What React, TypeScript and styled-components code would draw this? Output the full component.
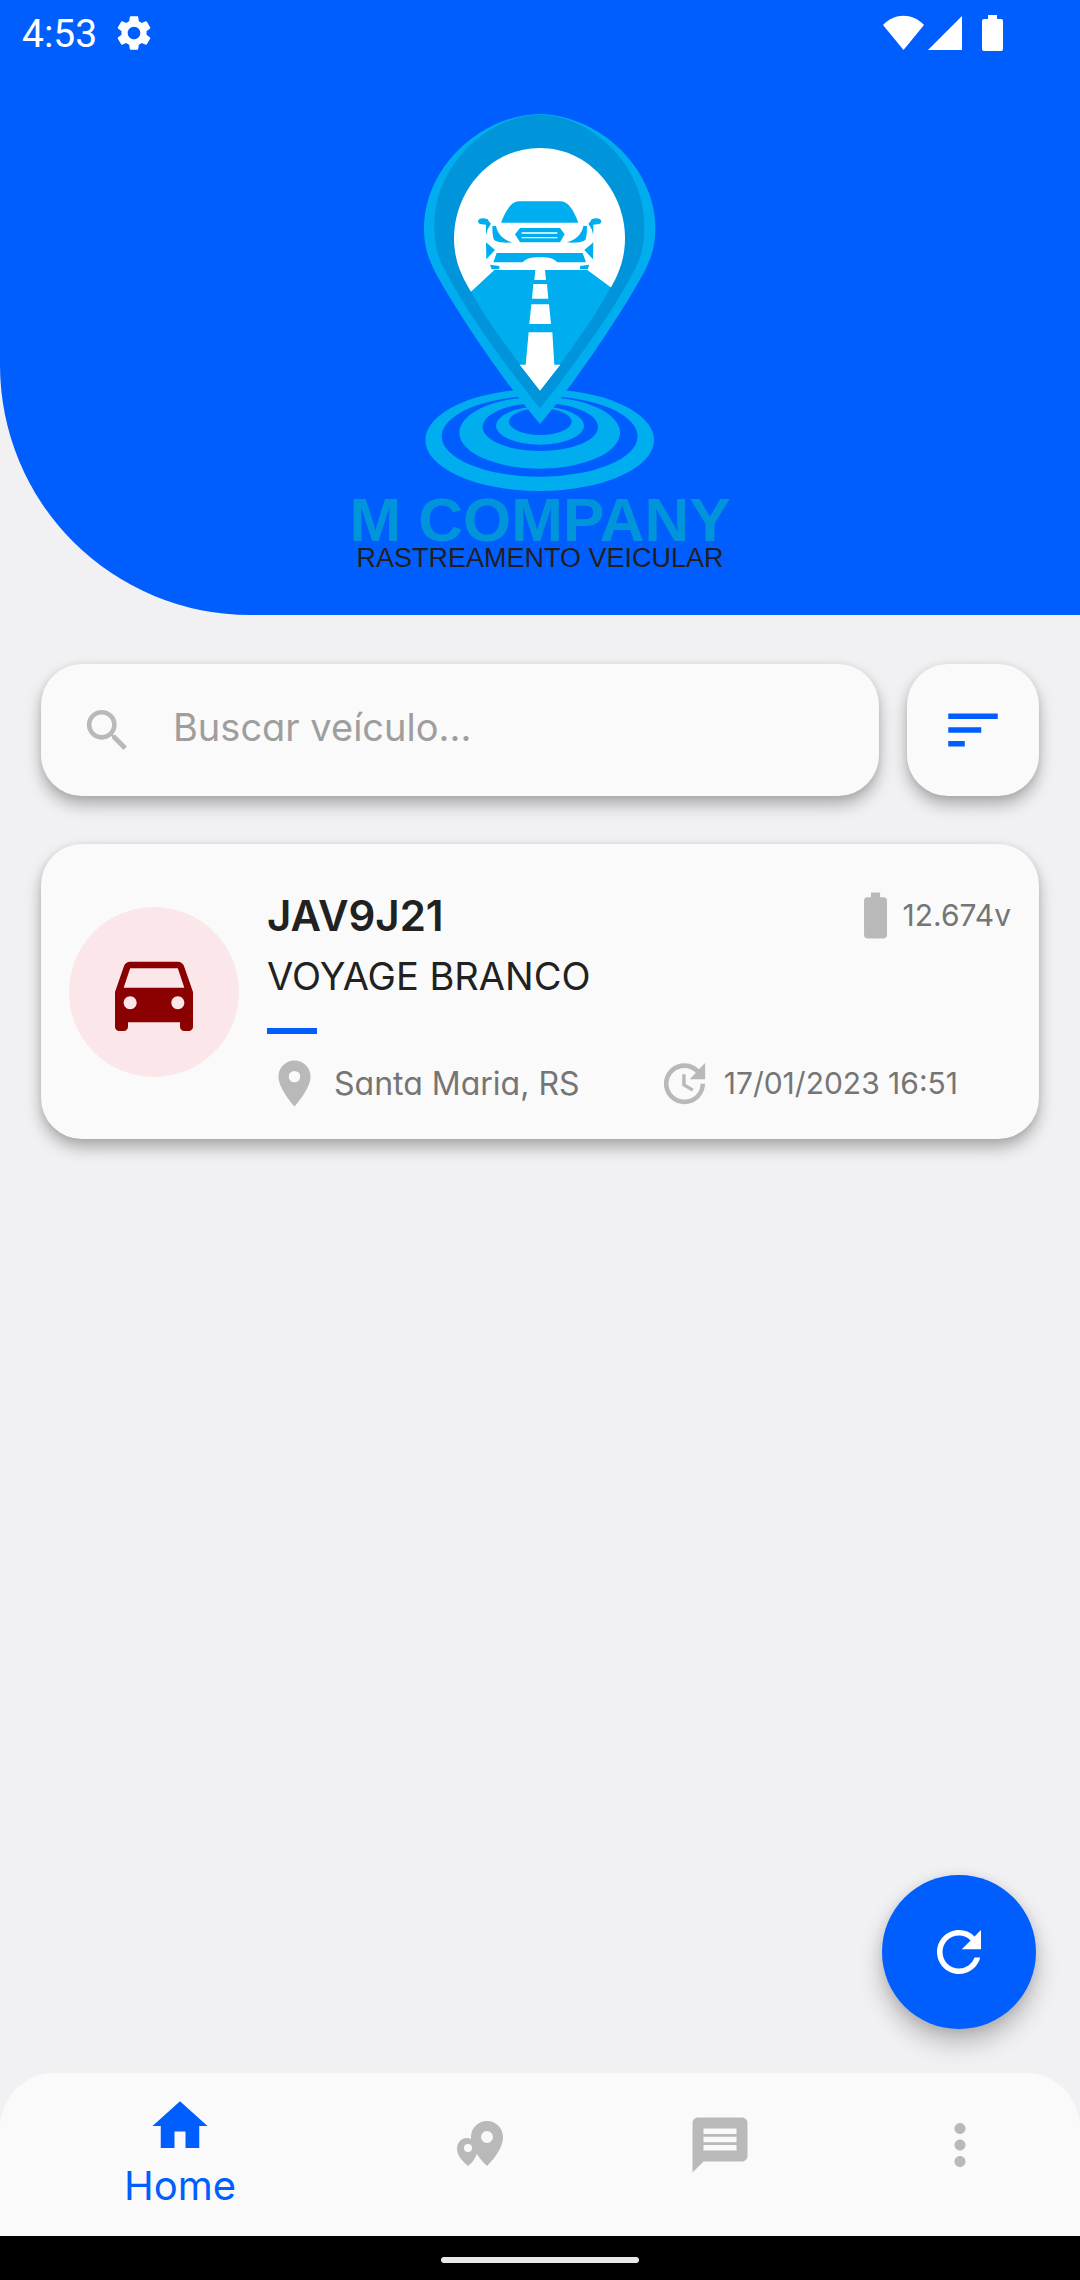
import React, { useState } from "react";
import styled, { createGlobalStyle } from "styled-components";
import {
  MdBatteryFull,
  MdDirectionsCar,
  MdMessage,
  MdMoreVert,
  MdPlace,
  MdRefresh,
  MdSearch,
  MdSettings,
  MdSort,
  MdUpdate,
} from "react-icons/md";

const color = {
  brand: "#005eff",
  page: "#f1f1f3",
  surface: "#fafafa",
  text: "#212121",
  muted: "#757575",
  hint: "#9e9e9e",
  icon: "#b9b9b9",
};

const GlobalStyle = createGlobalStyle`
  *, *::before, *::after { box-sizing: border-box; }
  body {
    margin: 0;
    background: ${color.page};
    color: ${color.text};
    font-family: Inter, "Open Sans", sans-serif;
    font-feature-settings: "cv11";
  }
  button, input { font: inherit; font-feature-settings: inherit; }
  svg { display: block; flex: none; }
`;

const Screen = styled.div`
  display: flex;
  flex-direction: column;
  min-height: 100vh;
`;

const Header = styled.header`
  background: ${color.brand};
  border-bottom-left-radius: 250px;
  padding-bottom: 43px;
`;

const StatusBar = styled.div`
  display: flex;
  align-items: center;
  height: 66px;
  padding: 0 77px 0 22px;
  color: #fff;
`;

const Clock = styled.time`
  font: 400 39px/46px Roboto, sans-serif;
  margin-right: 16px;
  padding-top: 2px;
`;

const StatusIcons = styled.div`
  display: flex;
  align-items: center;
  gap: 4px;
  margin-left: auto;
`;

const Brand = styled.div`
  display: flex;
  flex-direction: column;
  align-items: center;
  padding-top: 46px;
  font-family: "Liberation Sans", Arial, sans-serif;
`;

const BrandName = styled.h1`
  margin: 0;
  font-size: 62px;
  line-height: 48px;
  font-weight: 700;
  color: #0095da;
`;

const Tagline = styled.p`
  margin: 0;
  font-size: 27px;
  line-height: 28px;
  color: #231f20;
`;

const Main = styled.main`
  flex: 1;
  display: flex;
  flex-direction: column;
  gap: 48px;
  padding: 49px 41px;
`;

const surface = `
  background: ${color.surface};
  border-radius: 41px;
  box-shadow: 0 9px 16px rgba(0, 0, 0, 0.28), 0 1px 7px rgba(0, 0, 0, 0.09);
`;

const SearchRow = styled.form`
  display: flex;
  gap: 28px;
`;

const SearchBox = styled.label`
  ${surface}
  flex: 1;
  display: flex;
  align-items: center;
  gap: 38px;
  height: 132px;
  padding: 0 39px;
  color: ${color.icon};
`;

const SearchInput = styled.input`
  flex: 1;
  min-width: 0;
  padding: 0 0 6px;
  border: 0;
  outline: 0;
  background: none;
  font-size: 38px;
  color: ${color.text};
  &::placeholder {
    color: ${color.hint};
    opacity: 1;
  }
`;

const SortButton = styled.button`
  ${surface}
  display: grid;
  place-items: center;
  width: 132px;
  height: 132px;
  padding: 0;
  border: 0;
  color: ${color.brand};
`;

const VehicleCard = styled.article`
  ${surface}
  display: flex;
  align-items: center;
  gap: 28px;
  padding: 28px;
`;

const Avatar = styled.div`
  display: grid;
  place-items: center;
  width: 170px;
  height: 170px;
  border-radius: 50%;
  background: #fbe6e9;
  color: #8b0000;
`;

const Details = styled.div`
  flex: 1;
  padding-top: 16px;
`;

const TitleRow = styled.div`
  display: flex;
  align-items: center;
  justify-content: space-between;
  height: 55px;
`;

const Plate = styled.h2`
  margin: 0;
  font-size: 42px;
  font-weight: 600;
`;

const Model = styled.p`
  margin: 0;
  font-size: 38px;
  line-height: 66px;
`;

const Accent = styled.hr`
  width: 50px;
  height: 6px;
  margin: 19px 0 22px;
  border: 0;
  background: ${color.brand};
`;

const Facts = styled.div`
  display: grid;
  grid-template-columns: 11fr 10fr;
`;

const Fact = styled.div<{ $gap?: number; $numeric?: boolean }>`
  display: flex;
  align-items: center;
  gap: ${(p) => p.$gap ?? 0}px;
  font-size: ${(p) => (p.$numeric ? 30 : 32)}px;
  line-height: 55px;
  color: ${color.muted};
  white-space: nowrap;
  svg { color: ${color.icon}; }
`;

const FabRow = styled.div`
  display: flex;
  justify-content: flex-end;
  padding: 0 44px 44px;
`;

const Fab = styled.button`
  display: grid;
  place-items: center;
  width: 154px;
  height: 154px;
  padding: 0;
  border: 0;
  border-radius: 50%;
  background: ${color.brand};
  color: #fff;
  box-shadow: 0 14px 24px rgba(0, 0, 0, 0.24), 0 2px 12px rgba(0, 0, 0, 0.1);
`;

const TabBar = styled.nav`
  display: flex;
  height: 163px;
  padding: 20px 0 23px;
  border-radius: 55px 55px 0 0;
  background: ${color.surface};
`;

const Tab = styled.button<{ $active: boolean }>`
  flex: ${(p) => (p.$active ? 3 : 2)} 1 0;
  display: flex;
  flex-direction: column;
  align-items: center;
  justify-content: center;
  padding: 0 0 ${(p) => (p.$active ? 0 : 16)}px;
  border: 0;
  background: none;
  font-size: 40px;
  line-height: 54px;
  color: ${(p) => (p.$active ? color.brand : color.icon)};
`;

const GestureBar = styled.div`
  display: grid;
  place-items: center;
  height: 44px;
  padding-top: 4px;
  background: #000;
  &::after {
    content: "";
    width: 198px;
    height: 6px;
    border-radius: 3px;
    background: #e8e8e8;
  }
`;

/* One half of the car's paired parts; the other half is the same, mirrored. */
const CarSide = () => (
  <>
    <path d="M234 394C235 384 250 383 263 388L268 396 273 401 263 418 258 435V404L240 402Q234 400 234 394Z" />
    <path d="M277 408H288C292 432 310 450 338 457 312 460 286 457 281 448 278 438 277 424 277 408Z" />
    <path d="M258 457 285 480 259 508Z" />
    <path d="M270 524 298 528V538H275Z" />
  </>
);

const LogoMark = () => (
  <svg width="240" height="384" viewBox="60 66 720 1152" role="img" aria-label="M Company">
    <defs>
      <clipPath id="sky">
        <path d="M150 160H690V640L632 592 562 540H283L213 605 150 660Z" />
      </clipPath>
    </defs>
    <g fill="#00aeef" fillRule="evenodd">
      <path d="M76 1050a343 153 0 1 0 686 0a343 153 0 1 0 -686 0ZM125 1039a294 121 0 1 0 588 0a294 121 0 1 0 -588 0Z" />
      <path d="M178 1028a241 108 0 1 0 482 0a241 108 0 1 0 -482 0ZM248 1011a173 72 0 1 0 346 0a173 72 0 1 0 -346 0Z" />
      <path d="M288 1007a132 57 0 1 0 264 0a132 57 0 1 0 -264 0ZM327 995a94 40 0 1 0 188 0a94 40 0 1 0 -188 0Z" />
      <path d="M419 72C240 76 72 234 72 415 72 470 85 505 105 545 150 630 290 850 420 1002 548 850 688 630 733 545 753 505 766 470 766 415 766 234 598 76 419 72Z" />
    </g>
    <path
      fill="#0095da"
      d="M419 74C264 76 103 225 103 405 103 480 120 515 140 550 190 650 310 820 420 955 528 820 648 650 698 550 718 515 733 480 733 405 733 225 574 76 419 74Z"
    />
    <path
      fill="#00aeef"
      d="M213 605 283 538H562L632 592C580 690 498 800 420 902 340 800 260 690 213 605Z"
    />
    <path
      fill="#fff"
      clipPath="url(#sky)"
      d="M419 174C270 174 162 305 162 445 162 510 185 560 213 605H625C653 560 675 510 675 445 675 305 568 174 419 174Z"
    />
    <path
      fill="#fff"
      d="M406 538H435L438 570H403ZM400 582H441L445 626H396ZM394 643H447L453 702H388ZM386 727H457L463 824H481L420 902 359 824H377Z"
    />
    <g fill="#00aeef">
      <path d="M303 398C316 364 334 334 356 334H482C506 334 522 364 535 398Z" />
      <path d="M345 433 360 414H480L494 433 480 457H360Z" />
      <path d="M290 489H548L558 517H472C458 504 450 502 420 502 390 502 382 504 368 517H280Z" />
      <CarSide />
      <g transform="matrix(-1 0 0 1 838 0)">
        <CarSide />
      </g>
    </g>
    <path stroke="#fff" strokeWidth="4" d="M365 429H472M365 443H472" />
  </svg>
);

const WifiIcon = () => (
  <svg width="41" height="42" viewBox="0 0 41 42" fill="currentColor" aria-hidden="true">
    <path d="M20.500 38 0 13C12 .8 29 .8 41 13Z" />
  </svg>
);

const SignalIcon = () => (
  <svg width="34" height="42" viewBox="0 0 34 42" fill="currentColor" aria-hidden="true">
    <path d="M0 38H34V4Z" />
  </svg>
);

const PhoneBatteryIcon = () => (
  <svg width="37" height="42" viewBox="-16 0 37 42" fill="currentColor" aria-hidden="true">
    <path d="M6 3H15V7H19Q21 7 21 9V37Q21 39 19 39H2Q0 39 0 37V9Q0 7 2 7H6Z" />
  </svg>
);

const HomeIcon = () => (
  <svg width="66" height="66" viewBox="0 0 24 24" fill="currentColor" aria-hidden="true">
    <path d="M10 20v-6h4v6h5v-8h3L12 3 2 12h3v8z" />
  </svg>
);

const PinsIcon = () => (
  <svg width="66" height="66" viewBox="0 0 66 66" fill="currentColor" fillRule="evenodd" aria-hidden="true">
    <path d="M40 9C31 9 24 16 24 25 24 26 24 26 24 27 17 24 10 29 10 37 10 43 15 49 21 54 25 51 27 48 30 42 33 47 36 50 40 54 48 46 56 35 56 25 56 16 49 9 40 9ZM40 19a6 6 0 1 1 0 12 6 6 0 0 1 0-12ZM21 32a4 4 0 1 1 0 8 4 4 0 0 1 0-8Z" />
  </svg>
);

const tabs = [
  { id: "home", label: "Home", icon: <HomeIcon /> },
  { id: "map", label: "Mapa", icon: <PinsIcon /> },
  { id: "messages", label: "Mensagens", icon: <MdMessage size={66} /> },
  { id: "more", label: "Mais", icon: <MdMoreVert size={66} /> },
];

const vehicles = [
  {
    plate: "JAV9J21",
    model: "VOYAGE BRANCO",
    voltage: "12.674v",
    place: "Santa Maria, RS",
    updated: "17/01/2023 16:51",
  },
];

export default function App() {
  const [query, setQuery] = useState("");
  const [active, setActive] = useState("home");
  const term = query.trim().toLowerCase();
  const shown = vehicles.filter((v) => `${v.plate} ${v.model}`.toLowerCase().includes(term));

  return (
    <>
      <GlobalStyle />
      <Screen>
        <Header>
          <StatusBar>
            <Clock>4:53</Clock>
            <MdSettings size={42} />
            <StatusIcons>
              <WifiIcon />
              <SignalIcon />
              <PhoneBatteryIcon />
            </StatusIcons>
          </StatusBar>
          <Brand>
            <LogoMark />
            <BrandName>M COMPANY</BrandName>
            <Tagline>RASTREAMENTO VEICULAR</Tagline>
          </Brand>
        </Header>

        <Main>
          <SearchRow onSubmit={(e) => e.preventDefault()}>
            <SearchBox>
              <MdSearch size={55} />
              <SearchInput
                type="text"
                aria-label="Buscar veículo"
                placeholder="Buscar veículo..."
                value={query}
                onChange={(e) => setQuery(e.target.value)}
              />
            </SearchBox>
            <SortButton type="button" aria-label="Ordenar">
              <MdSort size={66} />
            </SortButton>
          </SearchRow>

          {shown.map((v) => (
            <VehicleCard key={v.plate}>
              <Avatar>
                <MdDirectionsCar size={104} />
              </Avatar>
              <Details>
                <TitleRow>
                  <Plate>{v.plate}</Plate>
                  <Fact $numeric>
                    <MdBatteryFull size={55} />
                    {v.voltage}
                  </Fact>
                </TitleRow>
                <Model>{v.model}</Model>
                <Accent />
                <Facts>
                  <Fact $gap={12}>
                    <MdPlace size={55} />
                    {v.place}
                  </Fact>
                  <Fact $gap={12} $numeric>
                    <MdUpdate size={55} />
                    {v.updated}
                  </Fact>
                </Facts>
              </Details>
            </VehicleCard>
          ))}
        </Main>

        <FabRow>
          <Fab type="button" aria-label="Atualizar">
            <MdRefresh size={66} />
          </Fab>
        </FabRow>

        <TabBar>
          {tabs.map((t) => (
            <Tab
              key={t.id}
              type="button"
              aria-label={t.label}
              $active={active === t.id}
              onClick={() => setActive(t.id)}
            >
              {t.icon}
              {active === t.id && t.label}
            </Tab>
          ))}
        </TabBar>
        <GestureBar />
      </Screen>
    </>
  );
}
